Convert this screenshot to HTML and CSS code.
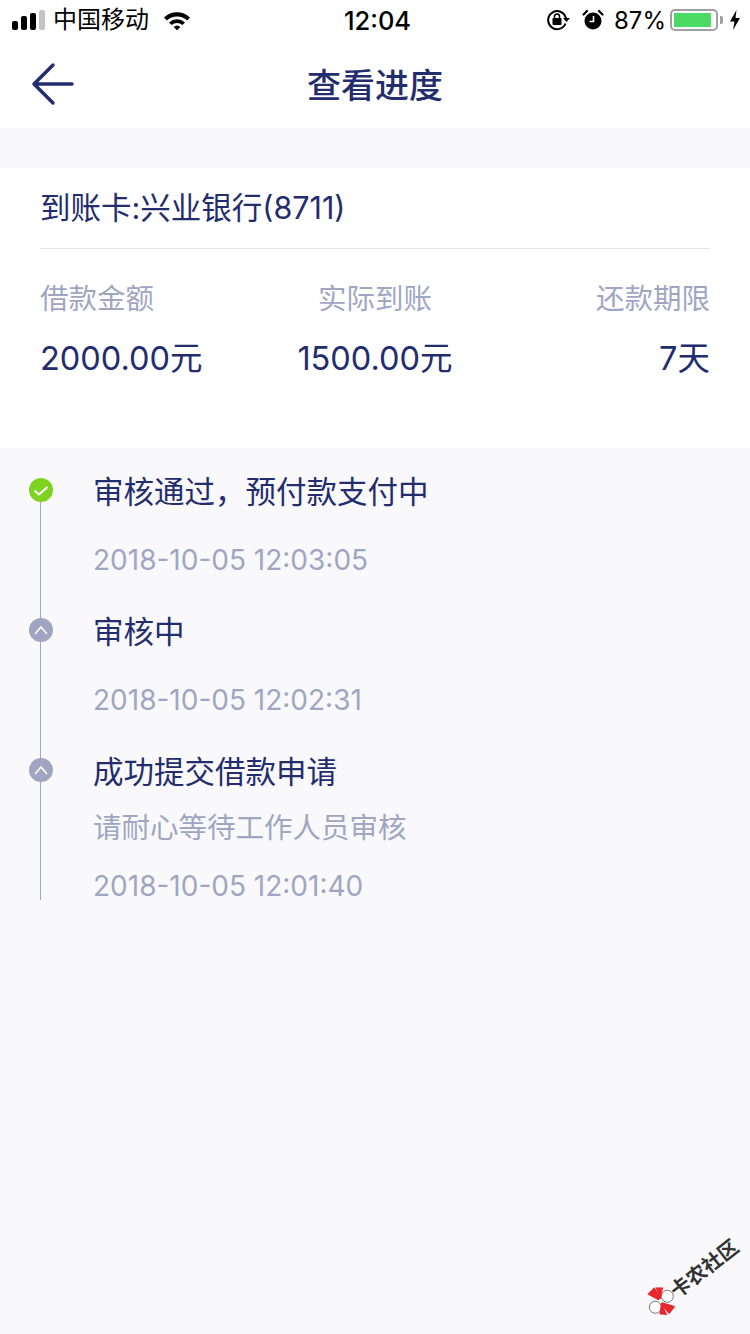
FILE: index.html
```html
<!DOCTYPE html>
<html lang="zh-CN">

<head>
  <meta charset="UTF-8" />
  <meta name="viewport" content="width=device-width, initial-scale=1.0" />
  <title>查看进度</title>
  <link rel="stylesheet" href="styles.css">
</head>

<body>
  <div class="status-bar">
    <div class="status-left">
      <div class="signal">
        <span class="bar bar-1"></span>
        <span class="bar bar-2"></span>
        <span class="bar bar-3"></span>
        <span class="bar bar-4"></span>
      </div>
      <span class="carrier">中国移动</span>
      <svg class="wifi" width="28" height="20" viewBox="0 0 28 20">
        <path d="M1 7.500 A19 19 0 0 1 27 7.500 L24.200 10.400 A15 15 0 0 0 3.800 10.400 Z" fill="#000" />
        <path d="M6 12.400 A12 12 0 0 1 22 12.400 L19.400 15 A8 8 0 0 0 8.600 15 Z" fill="#000" />
        <path d="M10.600 17 A5 5 0 0 1 17.400 17 L14 20.400 Z" fill="#000" />
      </svg>
    </div>
    <div class="status-time">12:04</div>
    <div class="status-right">
      <svg class="lock" width="24" height="22" viewBox="0 0 24 22">
        <path d="M19.500 14.500 A9 9 0 1 1 20 9.500" fill="none" stroke="#000" stroke-width="2" />
        <path d="M17 9 L24 9 L20.500 13 Z" fill="#000" />
        <rect x="6.500" y="9" width="9" height="7" rx="1" fill="#000" />
        <path d="M8.500 9 V7.500 A2.500 2.500 0 0 1 13.500 7.500 V9" fill="none" stroke="#000" stroke-width="1.500" />
      </svg>
      <svg class="alarm" width="22" height="22" viewBox="0 0 22 22">
        <circle cx="11" cy="12" r="8.500" fill="#000" />
        <path d="M1.500 5.500 L5 2 M20.500 5.500 L17 2" stroke="#000" stroke-width="2.200" stroke-linecap="round" />
        <path d="M11.500 7 V12.500 H7.500" fill="none" stroke="#fff" stroke-width="1.600" />
      </svg>
      <span class="percent">87%</span>
      <div class="battery">
        <div class="battery-level"></div>
      </div>
      <span class="battery-tip"></span>
      <svg class="bolt" width="12" height="20" viewBox="0 0 12 20">
        <path d="M7.500 0 L1 11.500 H5.500 L4 20 L11 8 H6.500 Z" fill="#000" />
      </svg>
    </div>
  </div>

  <div class="nav">
    <svg class="back" width="44" height="44" viewBox="0 0 44 44">
      <path d="M41 22 H4 M22 3 L3 22 L22 41" fill="none" stroke="#232d6e" stroke-width="3.500" stroke-linecap="round" stroke-linejoin="round" />
    </svg>
    <h1>查看进度</h1>
  </div>

  <div class="card">
    <div class="card-title">到账卡:兴业银行(8711)</div>
    <div class="summary">
      <div class="summary-col">
        <div class="summary-label">借款金额</div>
        <div class="summary-value">2000.00元</div>
      </div>
      <div class="summary-col col-center">
        <div class="summary-label">实际到账</div>
        <div class="summary-value">1500.00元</div>
      </div>
      <div class="summary-col col-right">
        <div class="summary-label">还款期限</div>
        <div class="summary-value">7天</div>
      </div>
    </div>
  </div>

  <div class="timeline">
    <div class="step">
      <span class="dot dot-done">
        <svg width="24" height="24" viewBox="0 0 24 24">
          <path d="M5.500 12.500 L10 16.500 L18.500 9" fill="none" stroke="#fff" stroke-width="2" />
        </svg>
      </span>
      <div class="step-title">审核通过，预付款支付中</div>
      <div class="step-time">2018-10-05 12:03:05</div>
    </div>
    <div class="step">
      <span class="dot">
        <svg width="24" height="24" viewBox="0 0 24 24">
          <path d="M6 16 L12 9 L18 16" fill="none" stroke="#fff" stroke-width="1.500" />
        </svg>
      </span>
      <div class="step-title">审核中</div>
      <div class="step-time">2018-10-05 12:02:31</div>
    </div>
    <div class="step">
      <span class="dot">
        <svg width="24" height="24" viewBox="0 0 24 24">
          <path d="M6 16 L12 9 L18 16" fill="none" stroke="#fff" stroke-width="1.500" />
        </svg>
      </span>
      <div class="step-title">成功提交借款申请</div>
      <div class="step-note">请耐心等待工作人员审核</div>
      <div class="step-time step-time-last">2018-10-05 12:01:40</div>
    </div>
  </div>

  <div class="watermark">
    <svg class="watermark-logo" width="28" height="28" viewBox="0 0 28 28">
      <circle cx="20" cy="9" r="6" fill="#fff" stroke="#555" stroke-width="0.800" />
      <circle cx="8" cy="20" r="6" fill="#fff" stroke="#555" stroke-width="0.800" />
      <path d="M11 13 L0 7 L7 0 L14 11 Z" fill="#e8282c" />
      <path d="M13 12 L16 0 L8 0 Z" fill="#e8282c" />
      <path d="M15 15 L28 19 L22 27 L13 17 Z" fill="#e8282c" />
      <path d="M14 15 L12 27 L20 28 Z" fill="#e8282c" />
    </svg>
    <span class="watermark-text">卡农社区</span>
  </div>
</body>

</html>
```

FILE: styles.css
```css
/* Global Styles */
* {
  box-sizing: border-box;
  margin: 0;
  padding: 0;
}

body {
  position: relative;
  width: 750px;
  height: 1334px;
  overflow: hidden;
  background: #f9f9fc;
  color: #232d6e;
  font-family: "Inter", "Noto Sans CJK SC", "Liberation Sans", sans-serif;
}

/* Status Bar */
.status-bar {
  display: flex;
  align-items: center;
  justify-content: space-between;
  height: 40px;
  padding: 0 9px 0 12px;
  background: #ffffff;
  color: #000000;
}

.status-left,
.status-right {
  display: flex;
  align-items: center;
  width: 300px;
}

.status-right {
  justify-content: flex-end;
}

.signal {
  display: flex;
  align-items: flex-end;
  gap: 3px;
  height: 20px;
}

.bar {
  width: 6px;
  border-radius: 2px;
  background: #000000;
}

.bar-1 { height: 9px; }
.bar-2 { height: 14px; }
.bar-3 { height: 17px; }
.bar-4 { height: 20px; background: #c4c4c4; }

.carrier {
  margin-left: 8px;
  font-size: 24px;
  line-height: 42px;
}

.wifi {
  margin-left: 14px;
}

.status-time {
  margin-left: 2px;
  font-size: 25.500px;
  font-weight: 500;
}

.lock {
  margin-right: 12px;
}

.alarm {
  margin-right: 10px;
}

.percent {
  font-size: 24px;
  margin-right: 4px;
}

.battery {
  width: 48px;
  height: 22px;
  padding: 2px;
  border: 2px solid #a0a0a0;
  border-radius: 5px;
}

.battery-level {
  width: 37px;
  height: 100%;
  background: #4cd964;
}

.battery-tip {
  width: 3px;
  height: 8px;
  margin-left: 2px;
  background: #a0a0a0;
  border-radius: 0 2px 2px 0;
}

.bolt {
  margin-left: 6px;
}

/* Nav */
.nav {
  position: relative;
  display: flex;
  align-items: center;
  justify-content: center;
  height: 88px;
  background: #ffffff;
}

.back {
  position: absolute;
  left: 31px;
  top: 22px;
}

.nav h1 {
  font-size: 34px;
  font-weight: 500;
  line-height: 92px;
  height: 88px;
}

/* Card */
.card {
  height: 280px;
  margin-top: 40px;
  padding: 0 40px;
  background: #ffffff;
}

.card-title {
  height: 81px;
  border-bottom: 1px solid #e4e4ec;
  font-size: 30.500px;
  line-height: 80px;
}

.summary {
  display: flex;
  justify-content: space-between;
  padding-top: 29px;
}

.summary-col {
  width: 224px;
}

.col-center {
  text-align: center;
}

.col-right {
  text-align: right;
}

.summary-label {
  color: #a0a6c2;
  font-size: 28.500px;
  line-height: 42px;
}

.summary-value {
  margin-top: 18px;
  font-size: 32.500px;
  line-height: 42px;
}

/* Timeline */
.timeline {
  position: relative;
  padding-top: 22px;
}

.timeline::before {
  content: "";
  position: absolute;
  left: 40px;
  top: 42px;
  width: 1px;
  height: 410px;
  background: #a0a6c2;
}

.step {
  position: relative;
  height: 140px;
  padding-left: 93px;
}

.dot {
  position: absolute;
  left: 29px;
  top: 8px;
  width: 24px;
  height: 24px;
  border-radius: 50%;
  background: #a0a6c2;
}

.dot svg {
  display: block;
}

.dot-done {
  background: #7ed321;
}

.step-title {
  font-size: 30.500px;
  line-height: 44px;
}

.step-note {
  margin-top: 13px;
  color: #a0a6c2;
  font-size: 28.500px;
  line-height: 42px;
}

.step-time {
  margin-top: 25px;
  color: #a0a6c2;
  font-size: 28px;
  line-height: 42px;
}

.step-time-last {
  margin-top: 16px;
}

/* Watermark */
.watermark {
  position: absolute;
  left: 650px;
  top: 1295px;
  display: flex;
  align-items: center;
  transform: rotate(-38deg);
  transform-origin: left center;
  width: 120px;
}

.watermark-logo {
  transform: rotate(38deg);
}

.watermark-text {
  color: #333333;
  font-size: 20px;
  font-weight: 700;
  white-space: nowrap;
}
```
